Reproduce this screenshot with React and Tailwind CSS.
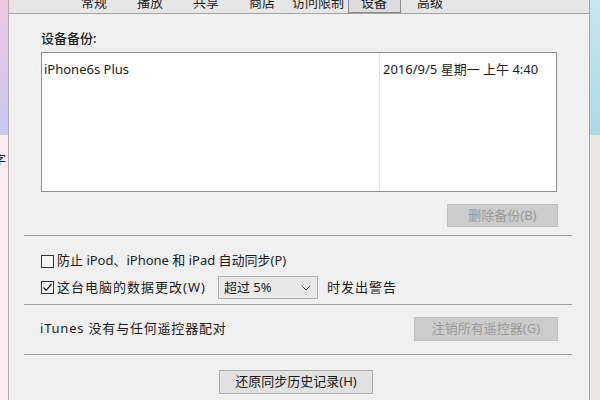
import React from 'react';

const tabs = ['常规', '播放', '共享', '商店', '访问限制', '设备', '高级'];

function Separator({ className = '' }) {
  return <div className={`ml-[15px] mr-[17px] h-[2px] border-t border-[#a0a0a0] border-b-white ${className}`} />;
}

function Checkbox({ checked }) {
  return (
    <span className="w-[13px] h-[13px] border border-[#333333] bg-[#f4f4f4] flex items-center justify-center shrink-0">
      {checked && (
        <svg width="11" height="11" viewBox="0 0 11 11">
          <path d="M1.5 5.5 L4.2 8.3 L9.5 2" fill="none" stroke="#222" strokeWidth="1.3" />
        </svg>
      )}
    </span>
  );
}

export default function App() {
  return (
    <div
      className="w-[600px] h-[400px] flex overflow-hidden bg-[#f0f0f0] text-[13px] text-[#1b1b1b]"
      style={{ fontFamily: '"Noto Sans", "Noto Sans CJK SC", sans-serif' }}
    >
      {/* left background strip */}
      <div className="w-[8px] flex flex-col shrink-0 overflow-hidden">
        <div className="h-[135px] bg-gradient-to-b from-[#f0c8de] via-[#d8c8ec] to-[#c8c8ef]" />
        <div className="flex-1 bg-[#f6eef1] overflow-hidden">
          <span className="block -ml-[7px] mt-[16px] leading-[16px] whitespace-nowrap">字</span>
        </div>
      </div>
      <div className="w-[1px] bg-[#b5a9ae] shrink-0" />

      {/* window */}
      <div className="flex-1 flex flex-col">
        <div className="h-[14px] bg-[#e6e6e6] border-b border-[#a3a3a3] overflow-hidden flex pl-[57px]">
          {tabs.map((t) => (
            <div key={t} className="w-[56px] flex justify-center">
              {t === '设备' ? (
                <span className="w-[53px] h-[13px] border border-t-0 border-[#8c8c8c] bg-[#dcdcdc] flex justify-center overflow-hidden">
                  <span className="-mt-[6px] leading-[16px]">{t}</span>
                </span>
              ) : (
                <span className="-mt-[6px] leading-[16px]">{t}</span>
              )}
            </div>
          ))}
        </div>

        <div className="pl-[32px] mt-[15px] leading-[18px] font-medium">设备备份:</div>

        <div className="ml-[32px] mt-[5px] w-[516px] h-[140px] bg-white border border-[#8e8e8e] flex">
          <div className="w-[338px] shrink-0 border-r border-[#e6e6e6] pl-[2px] pt-[7px] leading-[18px]">iPhone6s Plus</div>
          <div className="pl-[3px] pt-[7px] leading-[18px] whitespace-nowrap">2016/9/5 星期一 上午 4:40</div>
        </div>

        <div className="flex justify-end pr-[31px] mt-[12px]">
          <div className="w-[111px] h-[23px] bg-[#cccccc] border border-[#bfbfbf] text-[#9a9a9a] flex items-center justify-center">
            删除备份(B)
          </div>
        </div>

        <Separator className="mt-[8px]" />

        <div className="pl-[32px] mt-[14px] flex items-center gap-[3px] h-[20px]">
          <Checkbox />
          <span>防止 iPod、iPhone 和 iPad 自动同步(P)</span>
        </div>

        <div className="pl-[32px] mt-[5px] flex items-center h-[23px]">
          <Checkbox checked />
          <span className="ml-[3px] tracking-[1px]">这台电脑的数据更改(W)</span>
          <div className="ml-[12px] w-[100px] h-[23px] border border-[#adadad] bg-[#e8e8e8] flex items-center justify-between pl-[5px] pr-[6px]">
            <span>超过 5%</span>
            <svg width="10" height="6" viewBox="0 0 10 6">
              <path d="M1 1 L5 5 L9 1" fill="none" stroke="#444" strokeWidth="1" />
            </svg>
          </div>
          <span className="ml-[9px] tracking-[1px]">时发出警告</span>
        </div>

        <Separator className="mt-[5px]" />

        <div className="pl-[31px] pr-[31px] mt-[11px] flex items-center justify-between h-[24px]">
          <span className="tracking-[0.8px]">iTunes 没有与任何遥控器配对</span>
          <div className="w-[144px] h-[24px] bg-[#cccccc] border border-[#bfbfbf] text-[#9a9a9a] flex items-center justify-center">
            注销所有遥控器(G)
          </div>
        </div>

        <Separator className="mt-[13px]" />

        <div className="flex mt-[14px] pl-[210px]">
          <div className="w-[154px] h-[24px] bg-[#e1e1e1] border border-[#adadad] flex items-center justify-center">
            还原同步历史记录(H)
          </div>
        </div>
      </div>

      <div className="w-[1px] bg-[#a9a0a2] shrink-0" />
      {/* right background strip */}
      <div className="w-[10px] flex flex-col shrink-0">
        <div className="h-[135px] bg-gradient-to-b from-[#c8e6ee] to-[#a8dae6]" />
        <div className="flex-1 bg-[#eee6e6]" />
      </div>
    </div>
  );
}
